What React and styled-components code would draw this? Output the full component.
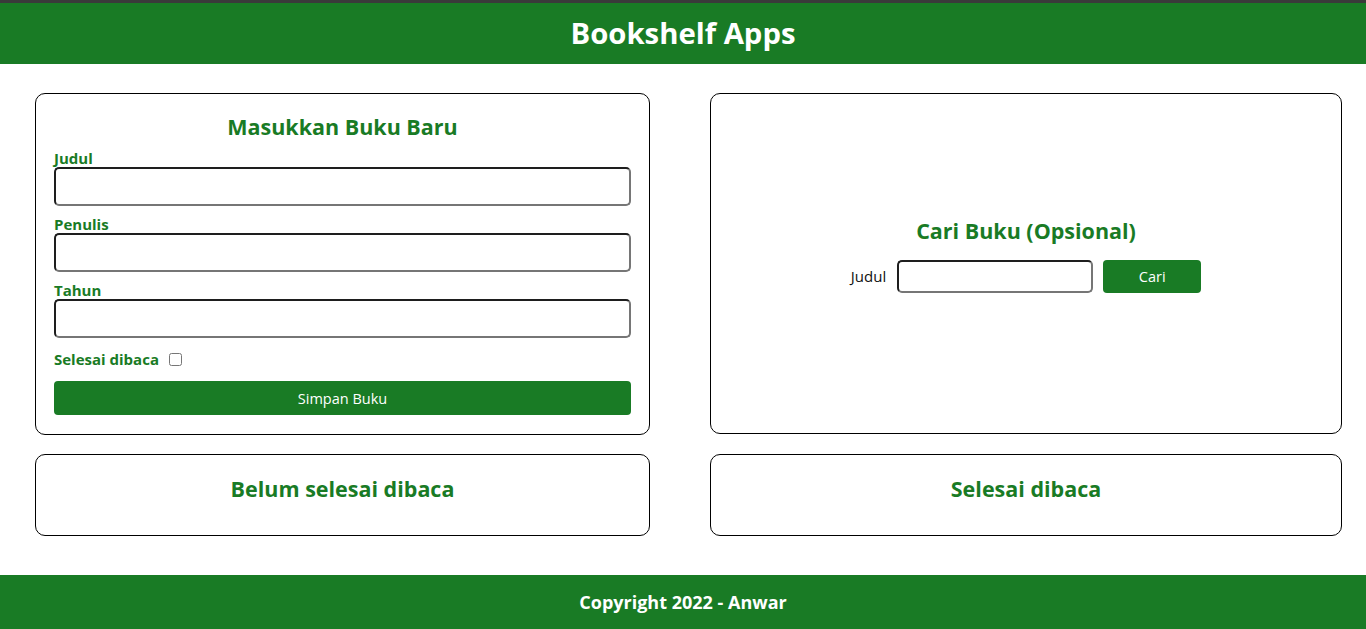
import React from "react";
import styled, { createGlobalStyle } from "styled-components";

const GREEN = "#197b25";

const Global = createGlobalStyle`
  html, body { margin: 0; padding: 0; background: #fff; }
  body { font-family: "Open Sans", "DejaVu Sans", sans-serif; }
  * { box-sizing: border-box; }
`;

const Header = styled.header`
  height: 64px;
  background: ${GREEN};
  border-top: 3px solid #3a3a3a;
  display: flex;
  align-items: center;
  justify-content: center;
`;

const AppTitle = styled.h1`
  margin: 0;
  color: #fff;
  font-size: 29.3px;
  font-weight: 700;
  line-height: 1;
`;

const Main = styled.main`
  display: grid;
  grid-template-columns: 615px 632px;
  column-gap: 60px;
  row-gap: 19px;
  padding: 29px 0 39px 35px;
`;

const Card = styled.section`
  border: 1px solid #000;
  border-radius: 10px;
  height: ${(p) => p.$h}px;
  padding: ${(p) => p.$pad || "19px 18px 19px 18px"};
  display: flex;
  flex-direction: column;
  justify-content: ${(p) => (p.$center ? "center" : "flex-start")};
`;

const CardTitle = styled.h2`
  margin: 0;
  text-align: center;
  color: ${GREEN};
  font-size: 21.5px;
  font-weight: 700;
  line-height: 28px;
`;

const Form = styled.form`
  display: flex;
  flex-direction: column;
  margin-top: 8px;
`;

const Group = styled.div`
  display: flex;
  flex-direction: column;
  margin-bottom: 9px;
`;

const Label = styled.label`
  color: ${GREEN};
  font-size: 15px;
  font-weight: 700;
  line-height: 18px;
`;

const TextInput = styled.input`
  height: 39px;
  width: 100%;
  border-width: 2px;
  border-style: solid;
  border-color: #1e1e1e #767676 #767676 #1e1e1e;
  border-radius: 5px;
  padding: 0 8px;
  font: inherit;
  outline: none;
`;

const CheckRow = styled.div`
  display: flex;
  align-items: center;
  height: 18px;
  margin-top: 3px;
`;

const Check = styled.input`
  width: 13px;
  height: 13px;
  margin: 0 0 0 10px;
`;

const Button = styled.button`
  background: ${GREEN};
  color: #fff;
  border: none;
  border-radius: 4px;
  font-family: inherit;
  font-size: 14.5px;
  cursor: pointer;
  height: ${(p) => p.$h}px;
  width: ${(p) => p.$w || "100%"};
  margin-top: ${(p) => p.$mt || 0}px;
`;

const SearchTitle = styled(CardTitle)`
  margin-bottom: 15px;
`;

const SearchRow = styled.form`
  display: flex;
  align-items: center;
  justify-content: center;
`;

const SearchLabel = styled.label`
  font-size: 15px;
  color: #111;
  margin-right: 11px;
`;

const SearchInput = styled(TextInput)`
  width: 196px;
  height: 33px;
  margin-right: 10px;
`;

const Footer = styled.footer`
  height: 54px;
  background: ${GREEN};
  display: flex;
  align-items: center;
  justify-content: center;
  color: #fff;
  font-size: 18px;
  font-weight: 700;
`;

export default function App() {
  return (
    <>
      <Global />
      <Header>
        <AppTitle>Bookshelf Apps</AppTitle>
      </Header>
      <Main>
        <Card $h={342}>
          <CardTitle>Masukkan Buku Baru</CardTitle>
          <Form onSubmit={(e) => e.preventDefault()}>
            <Group>
              <Label htmlFor="t">Judul</Label>
              <TextInput id="t" type="text" />
            </Group>
            <Group>
              <Label htmlFor="p">Penulis</Label>
              <TextInput id="p" type="text" />
            </Group>
            <Group>
              <Label htmlFor="y">Tahun</Label>
              <TextInput id="y" type="number" />
            </Group>
            <CheckRow>
              <Label htmlFor="c">Selesai dibaca</Label>
              <Check id="c" type="checkbox" />
            </CheckRow>
            <Button $h={34} $mt={13} type="submit">
              Simpan Buku
            </Button>
          </Form>
        </Card>
        <Card $h={341} $center $pad="19px 18px 37px 18px">
          <SearchTitle>Cari Buku (Opsional)</SearchTitle>
          <SearchRow onSubmit={(e) => e.preventDefault()}>
            <SearchLabel htmlFor="s">Judul</SearchLabel>
            <SearchInput id="s" type="text" />
            <Button $h={33} $w="98px" type="submit">
              Cari
            </Button>
          </SearchRow>
        </Card>
        <Card $h={82} $pad="20px 18px">
          <CardTitle>Belum selesai dibaca</CardTitle>
        </Card>
        <Card $h={82} $pad="20px 18px">
          <CardTitle>Selesai dibaca</CardTitle>
        </Card>
      </Main>
      <Footer>Copyright 2022 - Anwar</Footer>
    </>
  );
}
